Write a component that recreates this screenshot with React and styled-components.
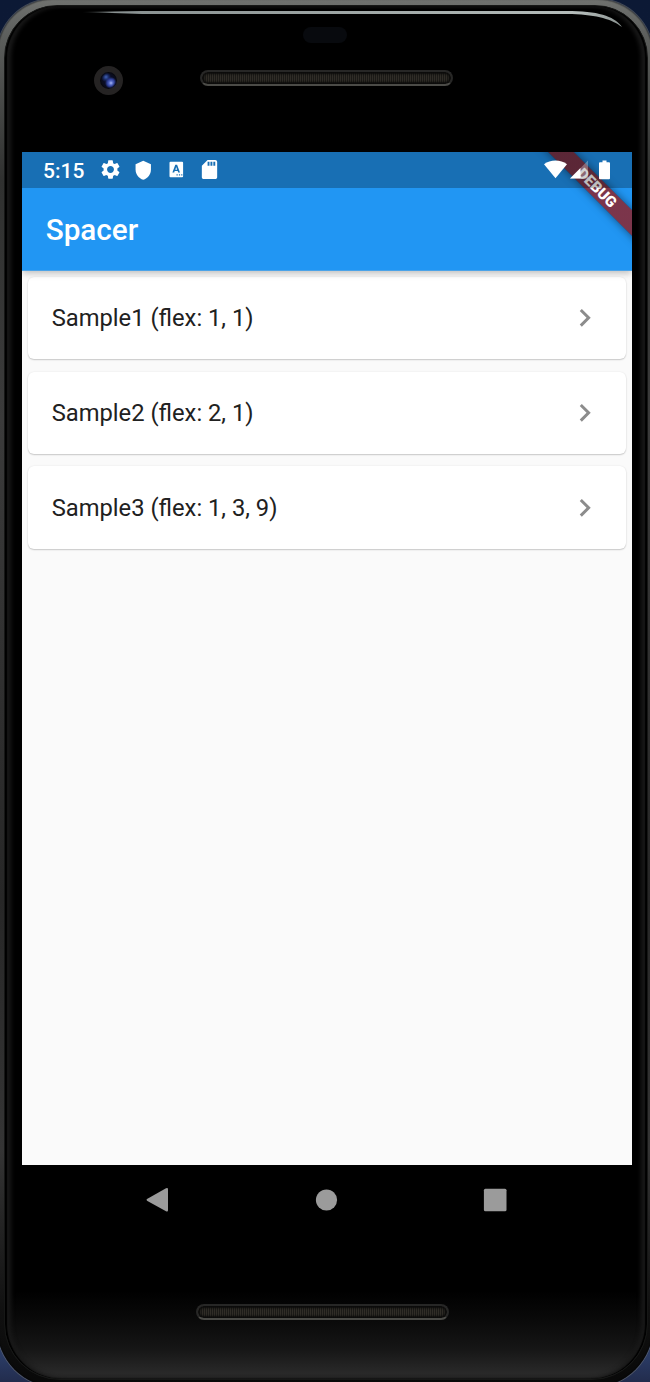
import React from "react";
import styled, { createGlobalStyle } from "styled-components";
import { MdSettings, MdShield, MdSdCard, MdChevronRight } from "react-icons/md";

const GlobalStyle = createGlobalStyle`
  * { box-sizing: border-box; }
  body { margin: 0; overflow: hidden; background: #101a30; font-family: Roboto, "Liberation Sans", sans-serif; }
`;

const Backdrop = styled.main`
  width: 650px;
  height: 1382px;
  overflow: hidden;
  background: linear-gradient(#0c1935 0, #101d38 50%, #2b3c66 98%, #222c4d 100%);
`;

const Shell = styled.div`
  width: 656px;
  height: 1388px;
  margin: -1px 0 0 -3px;
  padding: 6px 5px 0 7px;
  border-radius: 56px 56px 60px 60px;
  background: linear-gradient(#70726f 0, #5b5d5b 40px, #303130 180px, #3b3b3b 420px, #272727 900px, #353535 1150px, #111 1310px, #080808 100%);
  box-shadow: inset 0 0 1px 1px #00000055, 0 0 0 1px #72747488;
`;

const Glass = styled.div`
  position: relative;
  display: flex;
  flex-direction: column;
  height: 1375px;
  padding: 146px 15px 0 17px;
  border-radius: 53px 53px 56px 56px;
  background: linear-gradient(#000 0, #000 1285px, #090909 1312px, #151515 1342px, #292929 1367px, #2b2b2b 1371px, #111 1375px);
  border: 1px solid #161716;
  box-shadow:
    inset 2px 0 1px #000,
    inset -2px 0 1px #000,
    inset 6px 0 4px #191919,
    inset -6px 0 4px #191919;
`;

const Glare = styled.svg`
  position: absolute;
  left: 77px;
  top: 0;
`;

const Sensor = styled.div`
  position: absolute;
  left: 298px;
  top: 21px;
  width: 44px;
  height: 16px;
  border-radius: 8px;
  background: #080a0e;
`;

const Camera = styled.div`
  position: absolute;
  left: 89px;
  top: 60px;
  width: 29px;
  height: 29px;
  border: 6px solid #252323;
  border-radius: 50%;
  background:
    radial-gradient(circle at 11px 11px, #a9b6f5 0, #5368c4 2px, #2b3b93 4px, transparent 6px),
    radial-gradient(circle at 6px 5px, #4061b5 0, #17265b 3px, transparent 5px),
    #0b0e24;
  box-shadow: inset 0 0 2px 1px #090909;
`;

const Speaker = styled.div`
  position: absolute;
  left: ${(p) => p.$x}px;
  top: ${(p) => p.$y}px;
  width: 253px;
  height: 16px;
  border: 2px solid #272726;
  border-bottom-color: #4b4b47;
  border-radius: 8px;
  background: repeating-linear-gradient(90deg, #302d27 0 1px, #1b1a17 1px 2px);
  box-shadow: inset 0 0 2px 2px #0b0b0a;
`;

const Screen = styled.section`
  position: relative;
  width: 610px;
  height: 1013px;
  background: #fafafa;
  overflow: hidden;
`;

const Header = styled.header`
  position: relative;
  height: 119px;
  background: linear-gradient(#2196f3 118px, #4ba3e8 118px);
  box-shadow: 0 3px 6px -1px rgba(0, 0, 0, 0.17), 0 5px 7px rgba(0, 0, 0, 0.04), 0 1px 8px rgba(0, 0, 0, 0.05);
`;

const StatusBar = styled.div`
  position: relative;
  z-index: 2;
  display: flex;
  align-items: center;
  height: 35.6px;
  padding: 0 21px;
  background: rgba(0, 0, 0, 0.26);
  color: #fff;
  svg { display: block; flex: none; }
`;

const Clock = styled.time`
  width: 56px;
  font-size: 21px;
  font-weight: 500;
  line-height: 36px;
  padding-top: 2px;
`;

const Notifications = styled.div`
  display: grid;
  grid-template-columns: repeat(4, 23px);
  place-items: center;
  column-gap: 10px;
`;

const SystemIcons = styled.div`
  display: grid;
  grid-template-columns: 26px 29px 12px;
  align-items: center;
  margin-left: auto;
`;

const Toolbar = styled.div`
  display: flex;
  align-items: center;
  height: 83px;
  padding: 2px 23.7px 0;
`;

const Title = styled.h1`
  margin: 0;
  color: #fff;
  font-size: 29.7px;
  font-weight: 500;
  line-height: 36px;
`;

const BannerArea = styled.div`
  position: absolute;
  inset: 0;
  z-index: 1;
  overflow: hidden;
  pointer-events: none;
`;

const Banner = styled.div`
  position: absolute;
  right: -64.5px;
  top: 26.5px;
  width: 200px;
  height: 17.8px;
  transform: rotate(45deg);
  background: linear-gradient(rgba(183, 28, 28, 0.63), rgba(183, 28, 28, 0.63)), rgba(0, 0, 0, 0.36);
  box-shadow: 0 0 9px rgba(0, 0, 0, 0.5);
  color: #fff;
  font-size: 15.1px;
  font-weight: 900;
  line-height: 18px;
  text-align: center;
`;

const List = styled.ul`
  display: flex;
  flex-direction: column;
  gap: 12.1px;
  margin: 0;
  padding: 5.8px 6px;
  list-style: none;
`;

const Card = styled.li`
  display: flex;
  align-items: center;
  justify-content: space-between;
  height: 82.7px;
  padding: 0 23.7px;
  border-radius: 6px;
  background: #fff;
  color: #212121;
  font-size: 23.74px;
  line-height: 30px;
  box-shadow: 0 1px 1.5px rgba(0, 0, 0, 0.19), 0 0 2px rgba(0, 0, 0, 0.08);
`;

const Chevron = styled(MdChevronRight)`
  width: 35.6px;
  height: 35.6px;
  color: #8c8c8c;
`;

const NavBar = styled.nav`
  display: flex;
  justify-content: space-between;
  align-items: center;
  width: 610px;
  height: 70px;
  padding: 0 125px 0 122.500px;
`;

function Keyboard() {
  return (
    <svg width="15" height="17" viewBox="0 0 15 17">
      <path fillRule="evenodd" fill="#fff" d="M1.5 0.8h11.6q1 0 1 1v13.4q0 1-1 1H1.5q-1 0-1-1V1.800q0-1 1-1zM6.300 3.800L3.400 11.600h1.800l.5-1.500h3l.5 1.500H11L8.100 3.800zM7.200 6l.9 2.700H6.300zM7.500 13.200v1.200h1.200v-1.200zm2.400 0v1.200h1.200v-1.200zm2.300 0v1.200h1.200v-1.200z" />
    </svg>
  );
}

function Wifi() {
  return (
    <svg width="23" height="19" viewBox="0 0 23 19">
      <path fill="#fff" d="M11.500 18.300L0 4.200C3.300 1.600 7.200.4 11.500.4S19.700 1.600 23 4.200z" />
    </svg>
  );
}

function Signal() {
  return (
    <svg width="19" height="19" viewBox="0 0 19 19">
      <path fill="#fff" fillOpacity=".3" d="M0 18.500L18 .5v18z" />
      <path fill="#fff" d="M0 18.500L10.500 8v10.500z" />
    </svg>
  );
}

function Battery() {
  return (
    <svg width="12" height="20" viewBox="0 0 12 20">
      <path fill="#fff" d="M3.500 .5h4v1.800h2.500q1 0 1 1v15q0 1-1 1h-9q-1 0-1-1v-15q0-1 1-1H3.500z" />
    </svg>
  );
}

const samples = ["Sample1 (flex: 1, 1)", "Sample2 (flex: 2, 1)", "Sample3 (flex: 1, 3, 9)"];

export default function App() {
  return (
    <Backdrop>
      <GlobalStyle />
      <Shell>
        <Glass>
          <Glare width="550" height="26" viewBox="0 0 550 26">
            <defs>
              <linearGradient id="glare" x1="0" x2="1">
                <stop offset="0" stopColor="#889090" stopOpacity=".2" />
                <stop offset=".06" stopColor="#889090" />
                <stop offset=".92" stopColor="#b4bcba" />
                <stop offset="1" stopColor="#8c9492" />
              </linearGradient>
            </defs>
            <path fill="url(#glare)" d="M0 6L60 5H490C520 5.500 534 12 540 21C530 13.500 516 9 490 8H60Z" />
          </Glare>
          <Sensor />
          <Camera />
          <Speaker $x={195} $y={64} />
          <Screen>
            <Header>
              <StatusBar>
                <Clock>5:15</Clock>
                <Notifications>
                  <MdSettings size={23} />
                  <MdShield size={20.5} />
                  <Keyboard />
                  <MdSdCard size={23} />
                </Notifications>
                <SystemIcons>
                  <Wifi />
                  <Signal />
                  <Battery />
                </SystemIcons>
              </StatusBar>
              <Toolbar>
                <Title>Spacer</Title>
              </Toolbar>
              <BannerArea>
                <Banner>DEBUG</Banner>
              </BannerArea>
            </Header>
            <List>
              {samples.map((label) => (
                <Card key={label}>
                  {label}
                  <Chevron />
                </Card>
              ))}
            </List>
          </Screen>
          <NavBar>
            <svg width="24" height="26" viewBox="0 0 24 26">
              <path fill="#9b9b9b" d="M2 12L21 1.200Q23 .4 23 2.200V23.200Q23 25.200 21 24.300L2 13.700Q1 12.800 2 12z" />
            </svg>
            <svg width="24" height="24" viewBox="0 0 24 24">
              <circle cx="12.500" cy="12" r="10.600" fill="#9b9b9b" />
            </svg>
            <svg width="24" height="24" viewBox="0 0 24 24">
              <rect x=".9" y=".7" width="22.600" height="22.600" rx="1.500" fill="#9b9b9b" />
            </svg>
          </NavBar>
          <Speaker $x={191} $y={1298} />
        </Glass>
      </Shell>
    </Backdrop>
  );
}
